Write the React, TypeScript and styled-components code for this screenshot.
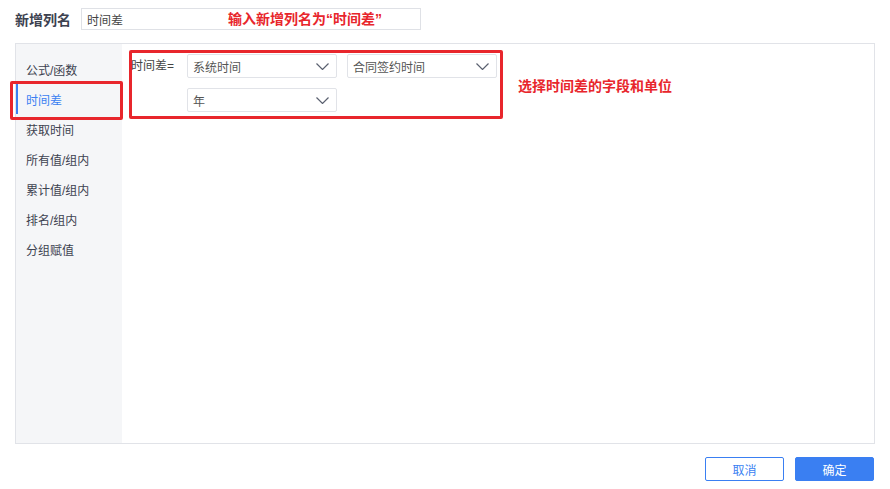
import { createGlobalStyle } from "styled-components";
import styled from "styled-components";

const GlobalStyle = createGlobalStyle`
  body {
    margin: 0;
    background: #ffffff;
    font-family: "Liberation Sans", "Noto Sans CJK SC", sans-serif;
    color: #333;
  }
`;

const Page = styled.div`
  width: 890px;
  height: 489px;
  box-sizing: border-box;
  padding: 8px 15px 0 15px;
  display: flex;
  flex-direction: column;
`;

const Header = styled.div`
  display: flex;
  align-items: center;
  height: 22px;
`;

const HeaderTitle = styled.div`
  width: 66px;
  font-size: 14px;
  font-weight: bold;
  color: #3d4250;
`;

const NameInput = styled.div`
  position: relative;
  width: 340px;
  height: 22px;
  box-sizing: border-box;
  border: 1px solid #dfe1e6;
  display: flex;
  align-items: center;
  padding-left: 5px;
  font-size: 12px;
  color: #444;
`;

const Note = styled.div<{ left: number; top: number }>`
  position: absolute;
  left: ${(p) => p.left}px;
  top: ${(p) => p.top}px;
  font-size: 14px;
  font-weight: bold;
  color: #e8262c;
  white-space: nowrap;
  line-height: 20px;
`;

const Panel = styled.div`
  margin-top: 13px;
  height: 401px;
  box-sizing: border-box;
  border: 1px solid #e1e3e8;
  display: flex;
`;

const Sidebar = styled.div`
  position: relative;
  width: 106px;
  background: #f5f6f8;
  padding-top: 10px;
  display: flex;
  flex-direction: column;
`;

const NavItem = styled.div<{ active?: boolean }>`
  height: 30px;
  display: flex;
  align-items: center;
  padding-left: 8px;
  font-size: 12px;
  color: ${(p) => (p.active ? "#3a7ff2" : "#3d4250")};
  border-left: 2px solid ${(p) => (p.active ? "#3a7ff2" : "transparent")};
  box-sizing: border-box;
`;

const Highlight = styled.div<{ left: number; top: number; w: number; h: number }>`
  position: absolute;
  left: ${(p) => p.left}px;
  top: ${(p) => p.top}px;
  width: ${(p) => p.w}px;
  height: ${(p) => p.h}px;
  box-sizing: border-box;
  border: 3px solid #e8262c;
  border-radius: 2px;
  pointer-events: none;
`;

const Content = styled.div`
  position: relative;
  flex: 1;
  padding: 10px 0 0 9px;
`;

const FormulaGrid = styled.div`
  display: grid;
  grid-template-columns: 46px 150px 150px;
  column-gap: 10px;
  row-gap: 10px;
  align-items: start;
`;

const FormulaLabel = styled.div`
  font-size: 12px;
  color: #444;
  line-height: 24px;
  white-space: nowrap;
`;

const Select = styled.div`
  height: 24px;
  box-sizing: border-box;
  border: 1px solid #e1e3e8;
  border-radius: 2px;
  display: flex;
  align-items: center;
  justify-content: space-between;
  padding: 0 7px 0 5px;
  font-size: 12px;
  color: #555;
`;

const Footer = styled.div`
  display: flex;
  justify-content: flex-end;
  gap: 11px;
  margin-top: 13px;
  padding-right: 1px;
`;

const Button = styled.div<{ primary?: boolean }>`
  width: 79px;
  height: 24px;
  box-sizing: border-box;
  border: 1px solid #3a7ff2;
  border-radius: 2px;
  background: ${(p) => (p.primary ? "#3a7ff2" : "#ffffff")};
  color: ${(p) => (p.primary ? "#ffffff" : "#3a7ff2")};
  font-size: 12px;
  display: flex;
  align-items: center;
  justify-content: center;
`;

function Chevron() {
  return (
    <svg width="13" height="7" viewBox="0 0 13 7">
      <path d="M0.5 0.5 L6.5 6.5 L12.5 0.5" fill="none" stroke="#5b6170" strokeWidth="1.2" />
    </svg>
  );
}

const navItems = ["公式/函数", "时间差", "获取时间", "所有值/组内", "累计值/组内", "排名/组内", "分组赋值"];

export default function App() {
  return (
    <Page>
      <GlobalStyle />
      <Header>
        <HeaderTitle>新增列名</HeaderTitle>
        <NameInput>
          时间差
          <Note left={146} top={0}>输入新增列名为“时间差”</Note>
        </NameInput>
      </Header>
      <Panel>
        <Sidebar>
          {navItems.map((n) => (
            <NavItem key={n} active={n === "时间差"}>
              {n}
            </NavItem>
          ))}
          <Highlight left={-6} top={37} w={113} h={39} />
        </Sidebar>
        <Content>
          <FormulaGrid>
            <FormulaLabel>时间差=</FormulaLabel>
            <Select>
              系统时间
              <Chevron />
            </Select>
            <Select>
              合同签约时间
              <Chevron />
            </Select>
            <div />
            <Select>
              年
              <Chevron />
            </Select>
          </FormulaGrid>
          <Highlight left={7} top={6} w={374} h={69} />
          <Note left={396} top={32}>选择时间差的字段和单位</Note>
        </Content>
      </Panel>
      <Footer>
        <Button>取消</Button>
        <Button primary>确定</Button>
      </Footer>
    </Page>
  );
}
